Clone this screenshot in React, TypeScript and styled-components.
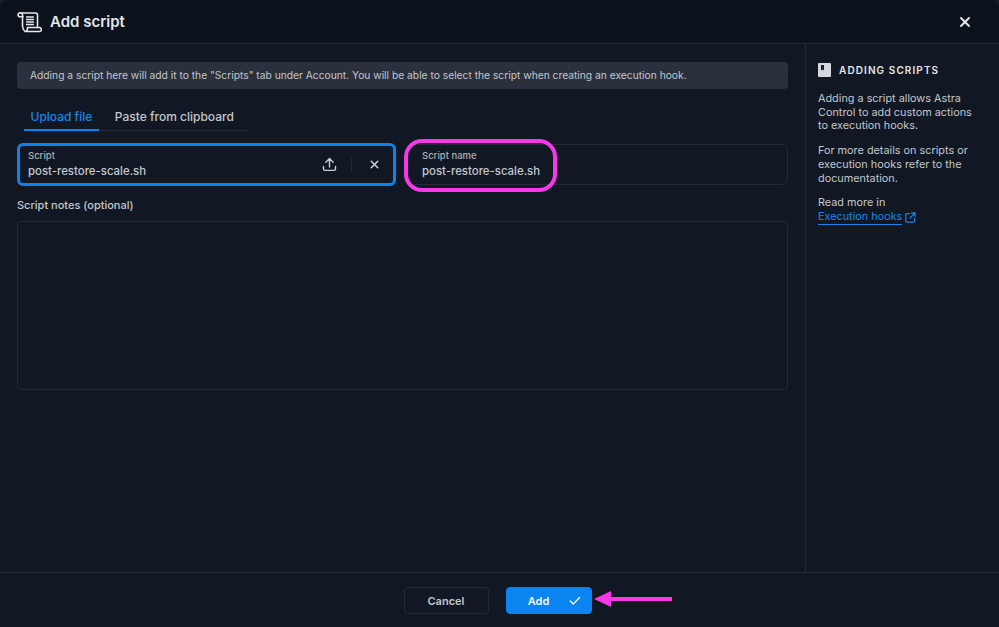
import React from 'react';
import styled, { createGlobalStyle } from 'styled-components';
import { Check, X } from 'lucide-react';

const colors = {
  page: '#111823',
  header: '#0c121c',
  line: '#232a36',
  info: '#2a303c',
  text: '#c3c7ce',
  strong: '#e4e6ea',
  blue: '#0a84f0',
  link: '#1a86e8',
  magenta: '#f838e8',
};

const GlobalStyle = createGlobalStyle`
  html, body {
    margin: 0;
    height: 100%;
    background: #1a1f28;
    font-family: Inter, "Liberation Sans", sans-serif;
  }
  * {
    box-sizing: border-box;
  }
`;

const Modal = styled.div`
  position: relative;
  width: 999px;
  height: 627px;
  display: flex;
  flex-direction: column;
  background: ${colors.page};
  border-radius: 8px 8px 0 0;
  overflow: hidden;
`;

const Header = styled.header`
  height: 44px;
  flex: none;
  display: flex;
  align-items: center;
  padding: 1px 26px 0 17px;
  background: ${colors.header};
  border-bottom: 1px solid ${colors.line};
`;

const Title = styled.h1`
  margin: 0 0 0 8px;
  flex: 1;
  font-size: 15px;
  line-height: 20px;
  font-weight: 600;
  color: ${colors.strong};
`;

const CloseButton = styled.button`
  display: flex;
  padding: 0;
  border: 0;
  background: none;
  color: ${colors.strong};
`;

const Body = styled.div`
  flex: 1;
  min-height: 0;
  display: flex;
`;

const Main = styled.main`
  flex: 1;
  padding: 18px 17px 0;
`;

const InfoBar = styled.div`
  height: 27px;
  display: flex;
  align-items: center;
  padding: 0 13px 1px;
  border-radius: 4px;
  background: ${colors.info};
  font-size: 10.250px;
  color: ${colors.text};
`;

const Tabs = styled.div`
  width: 224px;
  height: 26px;
  margin: 16px 0 12px 7px;
  display: flex;
  gap: 16px;
  border-bottom: 1px solid ${colors.line};
`;

const Tab = styled.div<{ $active?: boolean }>`
  height: 26px;
  padding: 0 ${p => (p.$active ? '6.500px' : '0')};
  font-size: 12px;
  line-height: 24px;
  font-weight: 500;
  color: ${p => (p.$active ? colors.link : colors.text)};
  border-bottom: ${p => (p.$active ? `2px solid ${colors.blue}` : '0')};
`;

const FieldRow = styled.div`
  display: flex;
  align-items: center;
  gap: 11px;
`;

const UploadField = styled.div`
  width: 379px;
  flex: none;
  height: 43px;
  display: flex;
  align-items: center;
  padding: 0 12.500px 0 8px;
  border-radius: 6px;
  border: 3px solid ${colors.blue};
`;

const NameField = styled.div`
  flex: 1;
  height: 41px;
  display: flex;
  align-items: center;
  padding: 0 14px;
  border-radius: 6px;
  border: 1px solid ${colors.line};
`;

const FieldText = styled.div`
  flex: 1;
  display: flex;
  flex-direction: column;
  gap: 2px;
`;

const FieldLabel = styled.label`
  font-size: 9.500px;
  line-height: 12px;
  font-weight: 500;
  color: #a9aeb6;
`;

const FieldValue = styled.span`
  font-size: 11.400px;
  line-height: 15px;
  font-weight: 500;
  color: ${colors.text};
`;

const FieldIcons = styled.div`
  display: flex;
  align-items: center;
  color: #c9ccd2;
`;

const Divider = styled.span`
  width: 1px;
  height: 14px;
  margin: 0 16px 0 14px;
  background: ${colors.line};
`;

const NotesLabel = styled.div`
  margin: 12px 0 9px;
  font-size: 11px;
  line-height: 14px;
  font-weight: 500;
  color: ${colors.text};
`;

const Notes = styled.div`
  height: 169px;
  border-radius: 4px;
  border: 1px solid ${colors.line};
`;

const Aside = styled.aside`
  width: 194px;
  flex: none;
  padding: 19px 18px 0 12px;
  border-left: 1px solid ${colors.line};
  font-size: 10.850px;
  line-height: 13.700px;
  color: ${colors.text};
`;

const AsideTitle = styled.div`
  display: flex;
  align-items: center;
  gap: 8px;
  margin-bottom: 15px;
  font-size: 10px;
  line-height: 14px;
  font-weight: 600;
  letter-spacing: 1.100px;
  color: ${colors.strong};
`;

const Paragraph = styled.p`
  margin: 0 0 11px;
`;

const DocLink = styled.a`
  display: inline-flex;
  align-items: center;
  gap: 3px;
  color: ${colors.link};
`;

const DocLinkText = styled.span`
  border-bottom: 1px solid ${colors.link};
`;

const Footer = styled.footer`
  height: 55px;
  flex: none;
  display: flex;
  justify-content: center;
  align-items: flex-start;
  gap: 17px;
  padding: 14px 4px 0 0;
  border-top: 1px solid ${colors.line};
`;

const Button = styled.button<{ $primary?: boolean }>`
  position: relative;
  width: ${p => (p.$primary ? '86px' : '85px')};
  height: 27px;
  padding: 0 ${p => (p.$primary ? '20px' : '0')} 0 0;
  border-radius: 4px;
  border: 1px solid ${p => (p.$primary ? colors.blue : colors.line)};
  background: ${p => (p.$primary ? colors.blue : 'transparent')};
  color: ${p => (p.$primary ? '#f2f6fb' : colors.text)};
  font-family: inherit;
  font-size: 11px;
  font-weight: 600;
`;

const ButtonIcon = styled.span`
  position: absolute;
  right: 9px;
  top: 6px;
  display: flex;
`;

// annotations drawn over the screenshot
const Highlight = styled.div`
  position: absolute;
  left: 404px;
  top: 139px;
  width: 153px;
  height: 53px;
  border: 4px solid ${colors.magenta};
  border-radius: 18px;
`;

const ArrowMark = styled.svg`
  position: absolute;
  left: 592px;
  top: 588px;
`;

const ScrollIcon = () => (
  <svg width="25" height="22" viewBox="0 0 25 22" fill="none" stroke="#e4e6ea" strokeWidth="1.600" strokeLinejoin="round" strokeLinecap="round">
    <path d="M5 2.500c-2-1.500-4-.5-4 1.300C1 5 2 5.800 3.500 5.800H6" />
    <path d="M3.500 2h15c1.300 0 2 .8 2 2v12.500" />
    <path d="M5.500 3.500V15c0 2.800.8 4 2.500 5.500h14.500c1.200 0 1.800-1 1.800-1.800 0-1.200-.8-2.200-2-2.200H10.500c.2 2-.3 3.200-1.500 4" />
    <path d="M9.500 6h7M9.500 8.500h7M9.500 11h7M9.500 13.500h7" strokeWidth="1.300" />
  </svg>
);

const BookIcon = () => (
  <svg width="13" height="14" viewBox="0 0 13 14">
    <rect width="13" height="14" rx="1" fill="#d5d7db" />
    <path d="M3 2h3v5.500l-1.500-1-1.500 1z" fill="#1a2029" />
  </svg>
);

const UploadIcon = () => (
  <svg width="15" height="15" viewBox="0 0 15 15" fill="none" stroke="currentColor" strokeWidth="1.400" strokeLinecap="round" strokeLinejoin="round">
    <path d="M7.500 10V1.800M3.800 5.200 7.500 1.500l3.700 3.700" />
    <path d="M1.500 9.500v2.300c0 1 .6 1.600 1.600 1.600h8.800c1 0 1.600-.6 1.600-1.600V9.500" />
  </svg>
);

const ExternalIcon = () => (
  <svg width="11" height="11" viewBox="0 0 12 12" fill="none" stroke="currentColor" strokeWidth="1.300" strokeLinecap="round" strokeLinejoin="round">
    <path d="M5 1.700H2.200c-.8 0-1.300.5-1.300 1.300v6.800c0 .8.5 1.300 1.300 1.300H9c.8 0 1.300-.5 1.300-1.300V7" />
    <path d="M7.200 1h3.800v3.800M11 1 5.500 6.500" />
  </svg>
);

const App: React.FunctionComponent = () => (
  <Modal>
    <GlobalStyle />
    <Header>
      <ScrollIcon />
      <Title>Add script</Title>
      <CloseButton aria-label="Close">
        <X size={16} strokeWidth={2.800} />
      </CloseButton>
    </Header>
    <Body>
      <Main>
        <InfoBar>
          Adding a script here will add it to the "Scripts" tab under Account. You will be able to select the script when creating an execution hook.
        </InfoBar>
        <Tabs>
          <Tab $active>Upload file</Tab>
          <Tab>Paste from clipboard</Tab>
        </Tabs>
        <FieldRow>
          <UploadField>
            <FieldText>
              <FieldLabel>Script</FieldLabel>
              <FieldValue>post-restore-scale.sh</FieldValue>
            </FieldText>
            <FieldIcons>
              <UploadIcon />
              <Divider />
              <X size={13} strokeWidth={2.800} />
            </FieldIcons>
          </UploadField>
          <NameField>
            <FieldText>
              <FieldLabel>Script name</FieldLabel>
              <FieldValue>post-restore-scale.sh</FieldValue>
            </FieldText>
          </NameField>
        </FieldRow>
        <NotesLabel>Script notes (optional)</NotesLabel>
        <Notes />
      </Main>
      <Aside>
        <AsideTitle>
          <BookIcon />
          ADDING SCRIPTS
        </AsideTitle>
        <Paragraph>Adding a script allows Astra Control to add custom actions to execution hooks.</Paragraph>
        <Paragraph>For more details on scripts or execution hooks refer to the documentation.</Paragraph>
        <Paragraph>
          Read more in
          <br />
          <DocLink>
            <DocLinkText>Execution hooks</DocLinkText>
            <ExternalIcon />
          </DocLink>
        </Paragraph>
      </Aside>
    </Body>
    <Footer>
      <Button>Cancel</Button>
      <Button $primary>
        Add
        <ButtonIcon>
          <Check size={14} strokeWidth={2.500} />
        </ButtonIcon>
      </Button>
    </Footer>
    <Highlight />
    <ArrowMark width="82" height="22" viewBox="0 0 82 22">
      <path d="M2 11 19 3v6h61v4H19v6z" fill={colors.magenta} />
    </ArrowMark>
  </Modal>
);

export default App;
